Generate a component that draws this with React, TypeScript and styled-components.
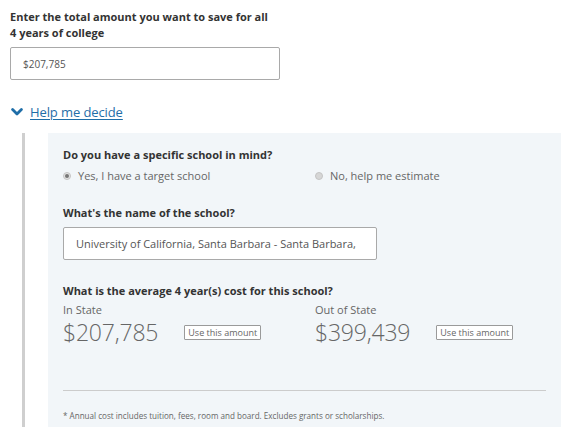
import React from "react";
import styled, { createGlobalStyle } from "styled-components";

const Global = createGlobalStyle`
  html, body { margin: 0; padding: 0; background: #fff; }
  body { font-family: "Open Sans", "Noto Sans", sans-serif; color: #333; }
  * { box-sizing: border-box; }
`;

const Page = styled.div`
  width: 566px;
  height: 427px;
  overflow: hidden;
  padding-top: 9px;
`;

const Top = styled.div`
  padding-left: 10px;
`;

const Label = styled.div`
  font-size: 11px;
  font-weight: 700;
  line-height: 16px;
  color: #333;
  width: 264px;
`;

const TextBox = styled.div<{ $w: number; $h: number; $pad: number; $fs: number; $mt: number }>`
  width: ${(p) => p.$w}px;
  height: ${(p) => p.$h}px;
  margin-top: ${(p) => p.$mt}px;
  border: 1px solid #a9a9a9;
  border-radius: 2px;
  background: #fff;
  display: flex;
  align-items: center;
  padding-left: ${(p) => p.$pad}px;
  font-size: ${(p) => p.$fs}px;
  color: #555;
  white-space: nowrap;
  overflow: hidden;
`;

const Toggle = styled.div`
  display: flex;
  align-items: center;
  gap: 7px;
  margin-top: 23px;
  padding-left: 1px;
  height: 18px;
`;

const HelpLink = styled.a`
  font-size: 13px;
  color: #1f6ea8;
  text-decoration: underline;
  text-underline-offset: 2px;
  line-height: 18px;
  letter-spacing: -0.1px;
`;

const Section = styled.div`
  display: flex;
  margin-top: 12px;
`;

const Bar = styled.div`
  width: 3px;
  margin-left: 22px;
  background: #cfcfcf;
  height: 300px;
`;

const Panel = styled.div`
  margin-left: 23px;
  width: 513px;
  background: #f2f6f9;
  padding: 14px 15px 0 15px;
  height: 300px;
`;

const Question = styled.div<{ $mt?: number }>`
  font-size: 11px;
  font-weight: 700;
  line-height: 16px;
  color: #333;
  margin-top: ${(p) => p.$mt ?? 0}px;
`;

const TwoCol = styled.div<{ $mt?: number }>`
  display: grid;
  grid-template-columns: 252px 1fr;
  margin-top: ${(p) => p.$mt ?? 0}px;
`;

const RadioOpt = styled.div`
  display: flex;
  align-items: center;
  gap: 7px;
  font-size: 11px;
  color: #666;
  line-height: 16px;
`;

const Dot = styled.span<{ $on?: boolean }>`
  width: 8px;
  height: 8px;
  border-radius: 50%;
  background: ${(p) => (p.$on ? "#e4e4e4" : "#d6d6d6")};
  border: 1px solid #c4c4c4;
  display: inline-flex;
  align-items: center;
  justify-content: center;
  &::after {
    content: "";
    width: 4px;
    height: 4px;
    border-radius: 50%;
    background: ${(p) => (p.$on ? "#777" : "transparent")};
  }
`;

const CostCol = styled.div``;

const SubLabel = styled.div`
  font-size: 11px;
  color: #666;
  line-height: 16px;
`;

const AmountRow = styled.div`
  display: flex;
  align-items: center;
  gap: 26px;
`;

const Amount = styled.div`
  font-size: 23px;
  font-weight: 300;
  color: #666;
  line-height: 28px;
  letter-spacing: -0.2px;
`;

const UseBtn = styled.button`
  font-family: inherit;
  font-size: 9px;
  color: #666;
  background: #fff;
  border: 1px solid #9a9a9a;
  border-radius: 1px;
  padding: 0 3px;
  height: 15px;
  line-height: 13px;
  width: 77px;
`;

const Rule = styled.hr`
  border: none;
  border-top: 1px solid #cccccc;
  margin: 44px 0 0 0;
  width: 483px;
`;

const Note = styled.div`
  font-size: 8.1px;
  color: #666;
  margin-top: 19px;
  line-height: 12px;
`;

const Chevron = () => (
  <svg width="12" height="8" viewBox="0 0 12 8">
    <path d="M1.6 1.6 L6 6 L10.4 1.6" fill="none" stroke="#1f6ea8" strokeWidth="2.8" strokeLinecap="round" strokeLinejoin="round" />
  </svg>
);

export default function App() {
  return (
    <Page>
      <Global />
      <Top>
        <Label>Enter the total amount you want to save for all 4 years of college</Label>
        <TextBox $w={270} $h={33} $pad={12} $fs={10} $mt={6}>$207,785</TextBox>
        <Toggle>
          <Chevron />
          <HelpLink>Help me decide</HelpLink>
        </Toggle>
      </Top>
      <Section>
        <Bar />
        <Panel>
          <Question>Do you have a specific school in mind?</Question>
          <TwoCol $mt={5}>
            <RadioOpt>
              <Dot $on />
              Yes, I have a target school
            </RadioOpt>
            <RadioOpt>
              <Dot />
              No, help me estimate
            </RadioOpt>
          </TwoCol>
          <Question $mt={21}>What's the name of the school?</Question>
          <TextBox $w={314} $h={33} $pad={12} $fs={11} $mt={6}>
            University of California, Santa Barbara - Santa Barbara,
          </TextBox>
          <Question $mt={23}>What is the average 4 year(s) cost for this school?</Question>
          <TwoCol $mt={3}>
            <CostCol>
              <SubLabel>In State</SubLabel>
              <AmountRow>
                <Amount>$207,785</Amount>
                <UseBtn>Use this amount</UseBtn>
              </AmountRow>
            </CostCol>
            <CostCol>
              <SubLabel>Out of State</SubLabel>
              <AmountRow>
                <Amount>$399,439</Amount>
                <UseBtn>Use this amount</UseBtn>
              </AmountRow>
            </CostCol>
          </TwoCol>
          <Rule />
          <Note>* Annual cost includes tuition, fees, room and board. Excludes grants or scholarships.</Note>
        </Panel>
      </Section>
    </Page>
  );
}
